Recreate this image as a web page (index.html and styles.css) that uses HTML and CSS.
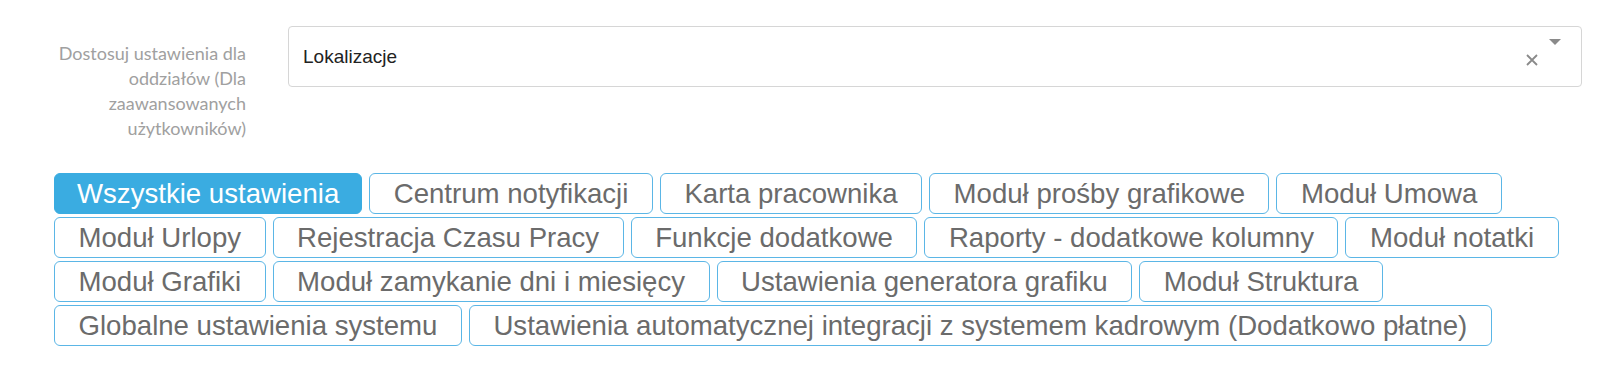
FILE: index.html
```html
<!DOCTYPE html>
<html lang="pl">
<head>
    <meta charset="UTF-8">
    <meta name="viewport" content="width=device-width, initial-scale=1.0">
    <title>Ustawienia</title>
    <link rel="stylesheet" href="styles.css">
</head>
<body>
    <div class="form-row">
        <label class="row-label" for="branch">Dostosuj ustawienia dla oddziałów (Dla zaawansowanych użytkowników)</label>
        <div class="select-box" id="branch">
            <span class="select-value">Lokalizacje</span>
            <span class="select-clear">
                <svg width="12" height="12" viewBox="0 0 12 12"><path d="M1 1L11 11M11 1L1 11" stroke="#8a8a8a" stroke-width="1.8"/></svg>
            </span>
            <span class="select-arrow"></span>
        </div>
    </div>

    <div class="tabs">
        <button class="tab active">Wszystkie ustawienia</button>
        <button class="tab">Centrum notyfikacji</button>
        <button class="tab">Karta pracownika</button>
        <button class="tab">Moduł prośby grafikowe</button>
        <button class="tab">Moduł Umowa</button>
        <button class="tab">Moduł Urlopy</button>
        <button class="tab">Rejestracja Czasu Pracy</button>
        <button class="tab">Funkcje dodatkowe</button>
        <button class="tab">Raporty - dodatkowe kolumny</button>
        <button class="tab">Moduł notatki</button>
        <button class="tab">Moduł Grafiki</button>
        <button class="tab">Moduł zamykanie dni i miesięcy</button>
        <button class="tab">Ustawienia generatora grafiku</button>
        <button class="tab">Moduł Struktura</button>
        <button class="tab">Globalne ustawienia systemu</button>
        <button class="tab">Ustawienia automatycznej integracji z systemem kadrowym (Dodatkowo płatne)</button>
    </div>
</body>
</html>
```

FILE: styles.css
```css
body {
    margin: 0;
    background-color: #ffffff;
    font-family: "Liberation Sans", Arial, sans-serif;
}
.form-row {
    display: flex;
    align-items: flex-start;
    padding-top: 26px;
}
.row-label {
    width: 196px;
    margin-left: 50px;
    margin-right: 42px;
    padding-top: 15px;
    font-family: Lato, sans-serif;
    font-size: 18px;
    line-height: 25px;
    color: #a0a0a0;
    text-align: right;
}
.select-box {
    flex: 1;
    display: flex;
    align-items: flex-start;
    height: 59px;
    margin-right: 18px;
    padding: 0 20px 0 14px;
    border: 1px solid #d6d6d6;
    border-radius: 4px;
}
.select-value {
    flex: 1;
    font-size: 19px;
    line-height: 59px;
    color: #222222;
}
.select-clear {
    display: flex;
    margin-top: 27px;
    margin-right: 11px;
}
.select-arrow {
    width: 0;
    height: 0;
    margin-top: 12px;
    border-left: 6.5px solid transparent;
    border-right: 6.5px solid transparent;
    border-top: 6px solid #8a8a8a;
}
.tabs {
    display: flex;
    flex-wrap: wrap;
    column-gap: 7px;
    row-gap: 3px;
    margin-top: 32px;
    padding-left: 54px;
    padding-right: 24px;
}
.tab {
    padding: 3px 23.5px;
    font-family: "Liberation Sans", Arial, sans-serif;
    font-size: 27.6px;
    line-height: 33px;
    color: #6b6b6b;
    background-color: #ffffff;
    border: 1px solid #5bb6e6;
    border-radius: 6px;
    cursor: pointer;
}
.tab.active {
    padding: 3px 22px;
    color: #ffffff;
    background-color: #3aace1;
    border-color: #3aace1;
}
```
